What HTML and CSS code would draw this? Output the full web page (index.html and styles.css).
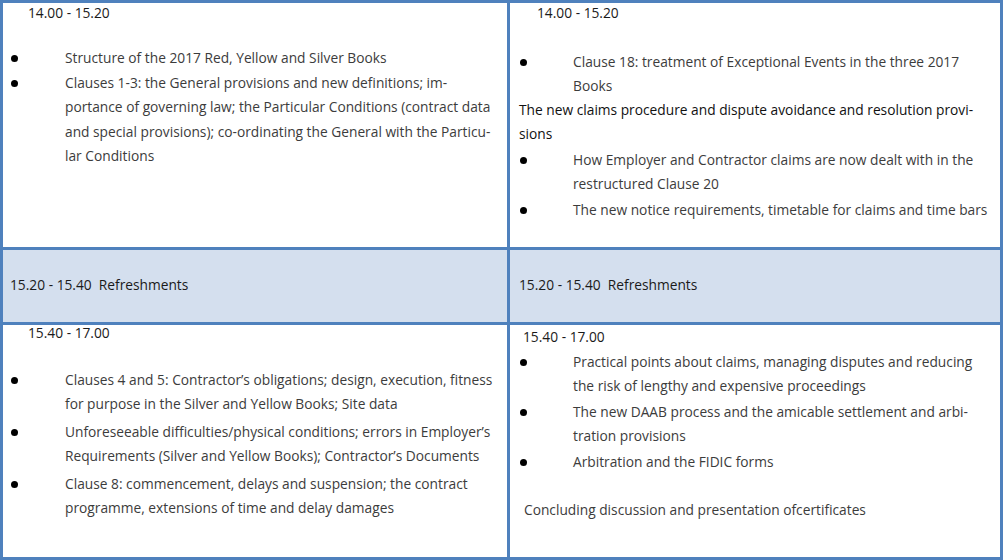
FILE: index.html
```html
<!DOCTYPE html>
<html lang="en">
<head>
<meta charset="utf-8">
<title>Programme</title>
<link rel="stylesheet" href="styles.css">
</head>
<body>
<div class="grid">
  <div class="cell c-l1">
    <div class="time t-l1">14.00 - 15.20</div>
    <div class="list l-l1">
      <div class="item"><span class="dot"></span><span class="txt">Structure of the 2017 Red, Yellow and Silver Books</span></div>
      <div class="item"><span class="dot"></span><span class="txt">Clauses 1-3: the General provisions and new definitions; im-<br>portance of governing law; the Particular Conditions (contract data<br>and special provisions); co-ordinating the General with the Particu-<br>lar Conditions</span></div>
    </div>
  </div>
  <div class="cell c-r1">
    <div class="time t-r1">14.00 - 15.20</div>
    <div class="list l-r1">
      <div class="item"><span class="dot"></span><span class="txt">Clause 18: treatment of Exceptional Events in the three 2017<br>Books</span></div>
    </div>
    <div class="para">The new claims procedure and dispute avoidance and resolution provi-<br>sions</div>
    <div class="list l-r1b">
      <div class="item"><span class="dot"></span><span class="txt">How Employer and Contractor claims are now dealt with in the<br>restructured Clause 20</span></div>
      <div class="item"><span class="dot"></span><span class="txt">The new notice requirements, timetable for claims and time bars</span></div>
    </div>
  </div>
  <div class="cell break b-l">15.20 - 15.40&nbsp; Refreshments</div>
  <div class="cell break b-r">15.20 - 15.40&nbsp; Refreshments</div>
  <div class="cell c-l3">
    <div class="time t-l3">15.40 - 17.00</div>
    <div class="list l-l3">
      <div class="item"><span class="dot"></span><span class="txt">Clauses 4 and 5: Contractor’s obligations; design, execution, fitness<br>for purpose in the Silver and Yellow Books; Site data</span></div>
      <div class="item"><span class="dot"></span><span class="txt">Unforeseeable difficulties/physical conditions; errors in Employer’s<br>Requirements (Silver and Yellow Books); Contractor’s Documents</span></div>
      <div class="item"><span class="dot"></span><span class="txt">Clause 8: commencement, delays and suspension; the contract<br>programme, extensions of time and delay damages</span></div>
    </div>
  </div>
  <div class="cell c-r3">
    <div class="time t-r3">15.40 - 17.00</div>
    <div class="list l-r3">
      <div class="item"><span class="dot"></span><span class="txt">Practical points about claims, managing disputes and reducing<br>the risk of lengthy and expensive proceedings</span></div>
      <div class="item"><span class="dot"></span><span class="txt">The new DAAB process and the amicable settlement and arbi-<br>tration provisions</span></div>
      <div class="item"><span class="dot"></span><span class="txt">Arbitration and the FIDIC forms</span></div>
    </div>
    <div class="closing">Concluding discussion and presentation ofcertificates</div>
  </div>
</div>
</body>
</html>
```

FILE: styles.css
```css
html, body {
  margin: 0;
  padding: 0;
  background: #ffffff;
}

body {
  font-family: "Open Sans", "Noto Sans", sans-serif;
  font-size: 13.75px;
  color: #3c3c3c;
}

.grid {
  width: 1003px;
  height: 560px;
  box-sizing: border-box;
  display: grid;
  grid-template-columns: 504px 490px;
  grid-template-rows: 244px 72px 232px;
  gap: 3px;
  padding: 3px;
  background: #4f81bd;
}

.cell {
  background: #ffffff;
  display: flex;
  flex-direction: column;
  white-space: nowrap;
  min-width: 0;
}

.time {
  color: #1a1a1a;
}

.list {
  display: flex;
  flex-direction: column;
}

.item {
  display: flex;
  align-items: flex-start;
}

.dot {
  flex: 0 0 auto;
  width: 7px;
  height: 7px;
  border-radius: 50%;
  background: #000000;
}

/* Row 1 left */
.t-l1 { padding-left: 25px; line-height: 20px; }
.l-l1 { margin-top: 23px; line-height: 24.5px; }
.l-l1 .item { padding-left: 8px; }
.l-l1 .dot { margin-top: 9px; margin-right: 47px; }

/* Row 1 right */
.t-r1 { padding-left: 27px; line-height: 20px; }
.l-r1 { margin-top: 27px; line-height: 24px; }
.l-r1 .item, .l-r1b .item { padding-left: 10px; }
.l-r1 .dot, .l-r1b .dot { margin-top: 9px; margin-right: 46px; }
.para {
  padding-left: 9px;
  line-height: 24px;
  color: #111111;
}
.l-r1b { margin-top: 2px; line-height: 24px; gap: 2px; }

/* Break row */
.break {
  background: #d4dfee;
  color: #1a1a1a;
  line-height: 24px;
  padding-top: 23px;
}
.b-l { padding-left: 7px; }
.b-r { padding-left: 9px; }

/* Row 3 left */
.t-l3 { padding-left: 25px; line-height: 16px; }
.l-l3 { margin-top: 27px; line-height: 24px; gap: 4px; }
.l-l3 .item { padding-left: 8px; }
.l-l3 .dot { margin-top: 9px; margin-right: 47px; }

/* Row 3 right */
.t-r3 { padding-left: 13px; line-height: 24px; }
.l-r3 { margin-top: 1px; line-height: 24px; gap: 2px; }
.l-r3 .item { padding-left: 10px; }
.l-r3 .dot { margin-top: 9px; margin-right: 46px; }
.closing {
  margin-top: 24px;
  padding-left: 14px;
  line-height: 24px;
}
```
